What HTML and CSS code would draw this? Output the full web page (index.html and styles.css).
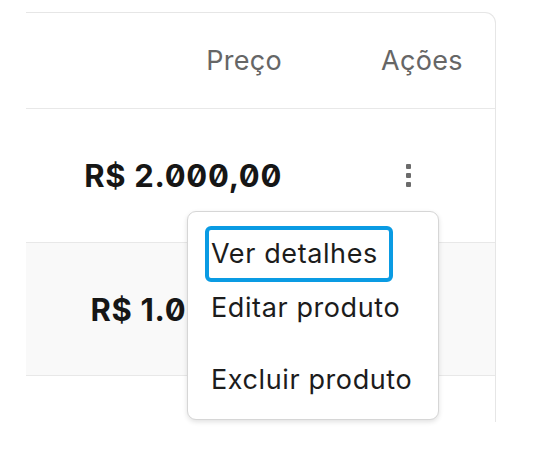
FILE: index.html
```html
<!DOCTYPE html>
<html lang="pt-BR">
<head>
<meta charset="utf-8">
<link rel="stylesheet" href="styles.css">
</head>
<body>
  <div class="card">
    <div class="row head">
      <div class="cell price">Preço</div>
      <div class="cell actions">Ações</div>
    </div>
    <div class="row">
      <div class="cell price value">R$ 2.000,00</div>
      <div class="cell actions">
        <button class="kebab" aria-label="Ações">
          <span></span><span></span><span></span>
        </button>
        <div class="menu">
          <div class="item focused">Ver detalhes</div>
          <div class="item second">Editar produto</div>
          <div class="item third">Excluir produto</div>
        </div>
      </div>
    </div>
    <div class="row alt">
      <div class="cell price value">R$ 1.000,00</div>
      <div class="cell actions"></div>
    </div>
    <div class="rest"></div>
  </div>
</body>
</html>
```
FILE: styles.css
```css
html, body {
  margin: 0;
  padding: 0;
  background: #ffffff;
}
body {
  font-family: "Inter", "Roboto", sans-serif;
  width: 546px;
  height: 451px;
  overflow: hidden;
}
.card {
  margin: 12px 0 0 26px;
  width: 469px;
  border-top: 1px solid #e6e6e6;
  border-right: 1px solid #e6e6e6;
  border-top-right-radius: 11px;
}
.row {
  display: grid;
  grid-template-columns: 355px 114px;
  align-items: center;
  height: 133px;
  border-bottom: 1px solid #e8e8e8;
}
.row.head {
  height: 95px;
}
.row.alt {
  background: #f9f9f9;
  height: 132px;
}
.cell.price {
  text-align: right;
  padding-right: 100px;
}
.head .cell {
  font-size: 27px;
  color: #666666;
  font-weight: 400;
  letter-spacing: 0.3px;
}
.head .cell.price {
  padding-right: 99px;
}
.value {
  font-size: 31px;
  font-weight: 700;
  color: #161616;
  letter-spacing: 0.7px;
  font-feature-settings: "zero" 1;
  white-space: nowrap;
}
.cell.price.value {
  padding-right: 99px;
}
.cell.actions {
  position: relative;
  height: 100%;
  display: flex;
  align-items: center;
}
.kebab {
  margin-left: 25px;
  width: 5px;
  padding: 0;
  border: 0;
  background: transparent;
  display: flex;
  flex-direction: column;
  gap: 4px;
}
.kebab span {
  display: block;
  width: 5px;
  height: 5px;
  background: #6b6b6b;
  border-radius: 1px;
}
.menu {
  position: absolute;
  left: -194px;
  top: 102px;
  width: 250px;
  height: 207px;
  background: #ffffff;
  border: 1px solid #d6d6d6;
  border-radius: 9px;
  box-shadow: 0 2px 5px rgba(0, 0, 0, 0.12);
  z-index: 2;
  box-sizing: content-box;
}
.item {
  position: absolute;
  left: 21px;
  font-size: 27px;
  letter-spacing: 0.6px;
  color: #1c1c1c;
  line-height: 48px;
  height: 48px;
  padding: 0 11px 0 2px;
  white-space: nowrap;
}
.item.focused {
  top: 18px;
  outline: 4px solid #0a9be3;
  border-radius: 2px;
}
.item.second {
  top: 72px;
}
.item.third {
  top: 144px;
}
.rest {
  height: 46px;
}
```
